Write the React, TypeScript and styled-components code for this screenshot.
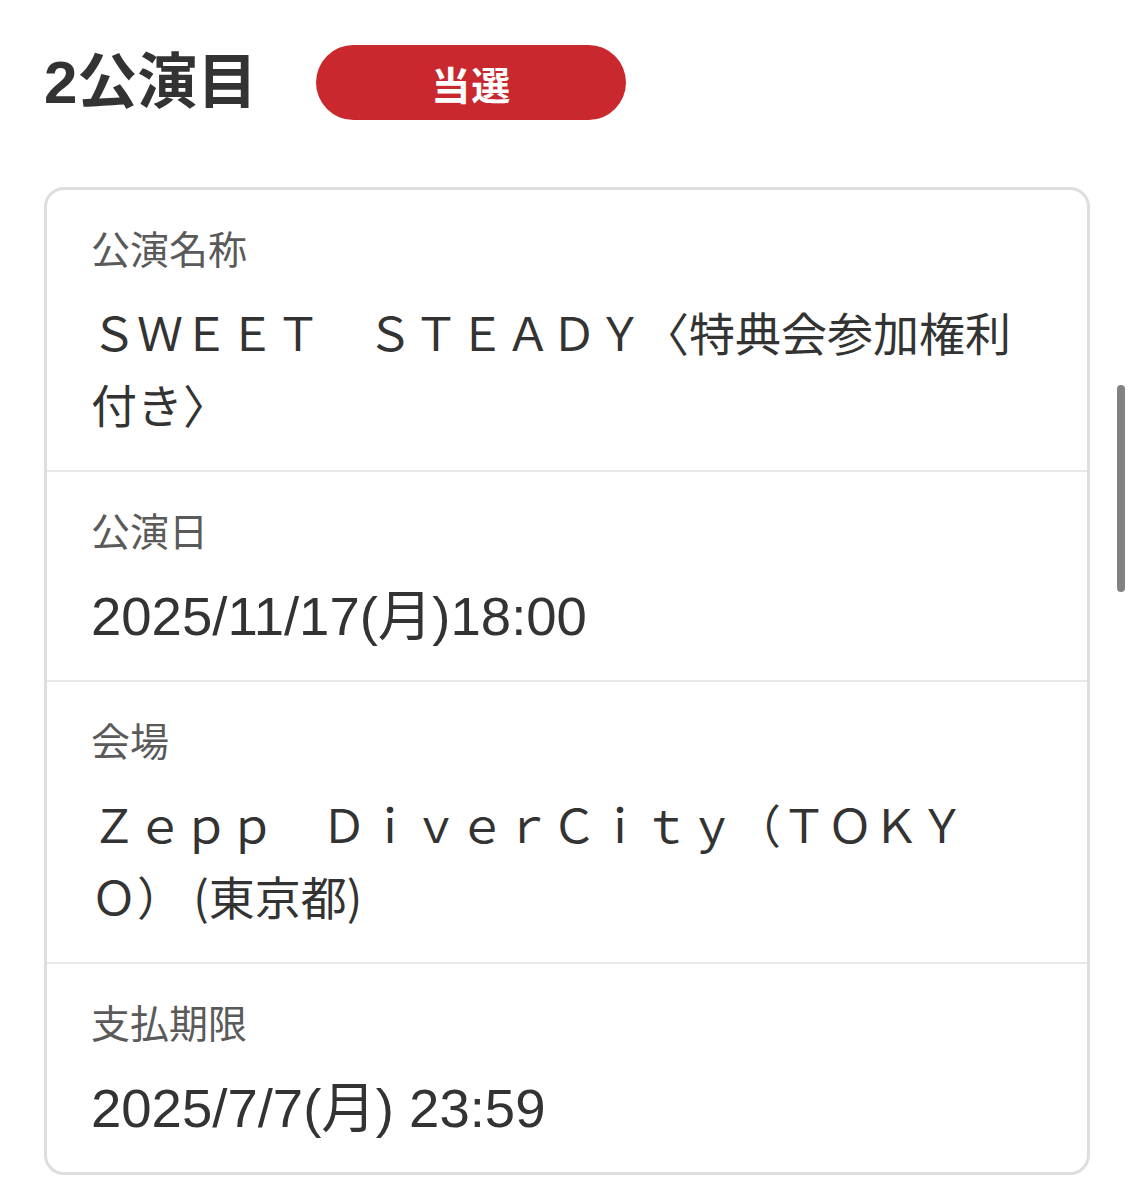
import React from 'react';
import styled, { createGlobalStyle } from 'styled-components';

const GlobalStyle = createGlobalStyle`
  html, body {
    margin: 0;
    padding: 0;
    background: #ffffff;
  }
  body {
    font-family: "Noto Sans CJK JP", "Liberation Sans", sans-serif;
    color: #333333;
  }
`;

const Page = styled.div`
  padding: 45px 44px 24px 44px;
`;

const Header = styled.div`
  display: flex;
  align-items: center;
  gap: 59px;
  height: 75px;
`;

const Title = styled.h2`
  margin: 0;
  font-family: "Liberation Sans", "Noto Sans CJK JP", sans-serif;
  font-size: 60px;
  font-weight: 700;
  line-height: 75px;
  color: #333333;
`;

const StatusBadge = styled.div`
  width: 310px;
  height: 75px;
  border-radius: 38px;
  background: #c9282e;
  color: #ffffff;
  display: flex;
  align-items: center;
  justify-content: center;
  font-size: 39px;
  font-weight: 700;
  letter-spacing: 1px;
`;

const Card = styled.div`
  margin-top: 67px;
  border: 3px solid #dedede;
  border-radius: 20px;
  overflow: hidden;
`;

const Row = styled.div`
  padding: 27px 44px 31px 44px;
  & + & {
    border-top: 2px solid #e8e8e8;
  }
`;

const Label = styled.div`
  font-size: 39px;
  line-height: 60px;
  color: #5a5a5a;
`;

const Value = styled.div<{ $latin?: boolean }>`
  margin-top: ${({ $latin }) => ($latin ? '22px' : '18px')};
  margin-bottom: ${({ $latin }) => ($latin ? '-4px' : '0')};
  font-family: ${({ $latin }) =>
    $latin ? `"Liberation Sans", "Noto Sans CJK JP", sans-serif` : `"Noto Sans CJK JP", sans-serif`};
  font-size: ${({ $latin }) => ($latin ? '54.5px' : '46px')};
  line-height: 72px;
  color: #333333;
  word-break: break-all;
`;

const ScrollThumb = styled.div`
  position: fixed;
  top: 385px;
  right: 9px;
  width: 8px;
  height: 207px;
  border-radius: 4px;
  background: #828282;
`;

const rows = [
  { label: '公演名称', value: 'ＳＷＥＥＴ　ＳＴＥＡＤＹ〈特典会参加権利付き〉' },
  { label: '公演日', value: '2025/11/17(月)18:00', latin: true },
  { label: '会場', value: 'Ｚｅｐｐ　ＤｉｖｅｒＣｉｔｙ（ＴＯＫＹＯ） (東京都)' },
  { label: '支払期限', value: '2025/7/7(月) 23:59', latin: true },
];

export default function App() {
  return (
    <>
      <GlobalStyle />
      <Page>
        <Header>
          <Title>2公演目</Title>
          <StatusBadge>当選</StatusBadge>
        </Header>
        <Card>
          {rows.map((r) => (
            <Row key={r.label}>
              <Label>{r.label}</Label>
              <Value $latin={r.latin}>{r.value}</Value>
            </Row>
          ))}
        </Card>
      </Page>
      <ScrollThumb />
    </>
  );
}
